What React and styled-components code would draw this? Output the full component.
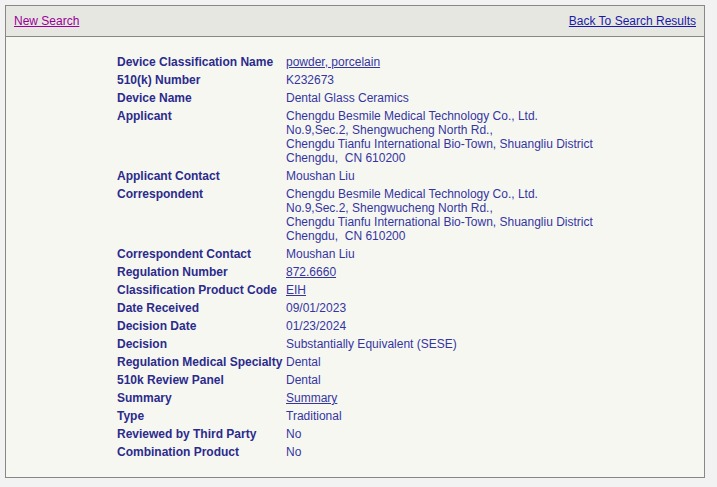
import React from "react";
import styled, { createGlobalStyle } from "styled-components";

const Global = createGlobalStyle`
  html, body { margin: 0; padding: 0; background: #f2f2f2; }
  body { font-family: "Liberation Sans", Arial, sans-serif; font-size: 12px; }
`;

const Page = styled.div`
  padding: 5px 11px 9px 5px;
`;

const Box = styled.div`
  border: 1px solid #888888;
  background: #f7f7f2;
  box-sizing: border-box;
  width: 700px;
`;

const Header = styled.div`
  display: flex;
  justify-content: space-between;
  align-items: center;
  height: 30px;
  padding: 0 8px;
  background: #e7e7e2;
  border-bottom: 1px solid #888888;
`;

const HeadLink = styled.a`
  font-size: 12px;
  color: ${(p) => (p.$visited ? "#990099" : "#1a1aa8")};
  text-decoration: underline;
`;

const Body = styled.div`
  padding: 18px 0 18px 111px;
`;

const Table = styled.div`
  display: grid;
  grid-template-columns: 169px auto;
  row-gap: 4px;
  line-height: 14px;
`;

const Label = styled.div`
  font-weight: bold;
  color: #2b2b8c;
`;

const Value = styled.div`
  color: #3535a0;
`;

const ValLink = styled.a`
  color: #3535a0;
  text-decoration: underline;
`;

const addr = [
  "Chengdu Besmile Medical Technology Co., Ltd.",
  "No.9,Sec.2, Shengwucheng North Rd.,",
  "Chengdu Tianfu International Bio-Town, Shuangliu District",
  "Chengdu,\u00a0 CN 610200",
];

const rows = [
  ["Device Classification Name", { link: "powder, porcelain" }],
  ["510(k) Number", "K232673"],
  ["Device Name", "Dental Glass Ceramics"],
  ["Applicant", addr],
  ["Applicant Contact", "Moushan Liu"],
  ["Correspondent", addr],
  ["Correspondent Contact", "Moushan Liu"],
  ["Regulation Number", { link: "872.6660" }],
  ["Classification Product Code", { link: "EIH" }],
  ["Date Received", "09/01/2023"],
  ["Decision Date", "01/23/2024"],
  ["Decision", "Substantially Equivalent (SESE)"],
  ["Regulation Medical Specialty", "Dental"],
  ["510k Review Panel", "Dental"],
  ["Summary", { link: "Summary" }],
  ["Type", "Traditional"],
  ["Reviewed by Third Party", "No"],
  ["Combination Product", "No"],
];

function renderValue(v) {
  if (Array.isArray(v))
    return v.map((line, i) => <div key={i}>{line}</div>);
  if (typeof v === "object") return <ValLink href="#">{v.link}</ValLink>;
  return v;
}

export default function App() {
  return (
    <>
      <Global />
      <Page>
        <Box>
          <Header>
            <HeadLink $visited href="#">New Search</HeadLink>
            <HeadLink href="#">Back To Search Results</HeadLink>
          </Header>
          <Body>
            <Table>
              {rows.map(([l, v]) => (
                <React.Fragment key={l}>
                  <Label>{l}</Label>
                  <Value>{renderValue(v)}</Value>
                </React.Fragment>
              ))}
            </Table>
          </Body>
        </Box>
      </Page>
    </>
  );
}
